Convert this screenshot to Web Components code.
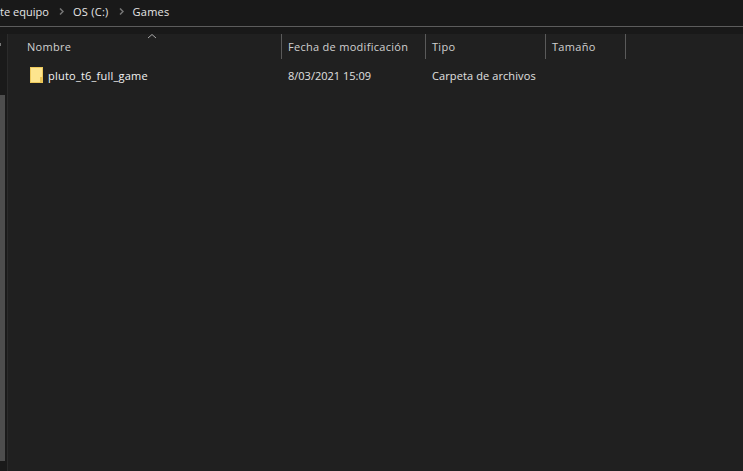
<!DOCTYPE html>
<html>
<head>
<meta charset="utf-8">
<style>
  html, body { margin: 0; height: 100%; background: #202020; overflow: hidden; }
  explorer-window { height: 471px; }
</style>
</head>
<body>
<explorer-window>
  <address-bar slot="top"></address-bar>
  <nav-rail slot="side"></nav-rail>
  <column-header slot="main"></column-header>
  <file-row slot="main" name="pluto_t6_full_game" date="8/03/2021 15:09" kind="Carpeta de archivos"></file-row>
</explorer-window>

<script>
const FONT = `"Open Sans", "Noto Sans", "Liberation Sans", sans-serif`;

class ExplorerWindow extends HTMLElement {
  constructor() {
    super();
    this.attachShadow({ mode: 'open' }).innerHTML = `
      <style>
        :host { display: flex; flex-direction: column; width: 743px; font-family: ${FONT}; color: #e6e6e6; }
        .body { flex: 1; display: flex; min-height: 0; }
        .main { flex: 1; display: flex; flex-direction: column; }
      </style>
      <slot name="top"></slot>
      <div class="body">
        <slot name="side"></slot>
        <div class="main"><slot name="main"></slot></div>
      </div>
    `;
  }
}

class AddressBar extends HTMLElement {
  constructor() {
    super();
    const chevron = `<svg width="5" height="7" viewBox="0 0 5 7"><path d="M1 .5 4 3.5 1 6.5" fill="none" stroke="#767676" stroke-width="1.5"/></svg>`;
    this.attachShadow({ mode: 'open' }).innerHTML = `
      <style>
        :host { display: block; background: #191919; height: 34px; box-sizing: border-box; }
        .crumbs { height: 26px; box-sizing: border-box; display: flex; align-items: center; font-size: 11px; letter-spacing: .25px; color: #e6e6e6; overflow: hidden; padding-bottom: 3px; }
        .first { letter-spacing: .03px; }
        svg { margin: 0 9px 0 10px; flex: none; }
        hr { margin: 0; border: 0; height: 1px; background: #5c5c5c; }
      </style>
      <div class="crumbs">
        <span class="first">te equipo</span>${chevron}<span>OS (C:)</span>${chevron}<span>Games</span>
      </div>
      <hr>
    `;
  }
}

class NavRail extends HTMLElement {
  constructor() {
    super();
    this.attachShadow({ mode: 'open' }).innerHTML = `
      <style>
        :host { display: flex; flex-direction: column; width: 8px; flex: none; background: #1a1a1a; border-right: 1px solid #2b2b2b; box-sizing: border-box; padding-top: 9px; padding-bottom: 10px; }
        .tick { width: 1px; height: 3px; background: #777; margin-bottom: 49px; }
        .thumb { flex: 1; width: 5px; background: #4d4d4d; }
      </style>
      <div class="tick"></div>
      <div class="thumb"></div>
    `;
  }
}

class ColumnHeader extends HTMLElement {
  constructor() {
    super();
    this.attachShadow({ mode: 'open' }).innerHTML = `
      <style>
        :host { display: grid; grid-template-columns: 274px 144px 120px 80px; height: 25px; position: relative; font-size: 11px; letter-spacing: .29px; color: #d0d0d0; }
        div { box-sizing: border-box; border-right: 1px solid #5a5a5a; padding-left: 19px; line-height: 25px; }
        div + div { padding-left: 6px; }
        svg { position: absolute; left: 139px; top: -1px; }
      </style>
      <div>Nombre</div><div>Fecha de modificación</div><div>Tipo</div><div>Tamaño</div>
      <svg width="10" height="6" viewBox="0 0 10 6"><path d="M1 5 5 1.5 9 5" fill="none" stroke="#a8a8a8"/></svg>
    `;
  }
}

class FileRow extends HTMLElement {
  constructor() {
    super();
    this.attachShadow({ mode: 'open' }).innerHTML = `
      <style>
        :host { display: grid; grid-template-columns: 274px 144px 120px; height: 22px; margin-top: 5px; align-items: center; font-size: 11px; color: #e0e0e0; }
        .name { display: flex; align-items: center; gap: 5px; padding-left: 22px; color: #f2f2f2; letter-spacing: .22px; }
        .cell { padding-left: 6px; }
        .kind { letter-spacing: .1px; }
        svg { flex: none; }
      </style>
      <div class="name">
        <svg width="13" height="16" viewBox="0 0 13 16">
          <rect x=".5" y=".5" width="12" height="15" fill="#fde58e" stroke="#edc95c"/>
          <path d="M10 15.5V10H12.5V15.5Z" fill="#e9c254"/>
        </svg>
        <span>${this.getAttribute('name')}</span>
      </div>
      <div class="cell">${this.getAttribute('date')}</div>
      <div class="cell kind">${this.getAttribute('kind')}</div>
    `;
  }
}

customElements.define('explorer-window', ExplorerWindow);
customElements.define('address-bar', AddressBar);
customElements.define('nav-rail', NavRail);
customElements.define('column-header', ColumnHeader);
customElements.define('file-row', FileRow);
</script>
</body>
</html>
